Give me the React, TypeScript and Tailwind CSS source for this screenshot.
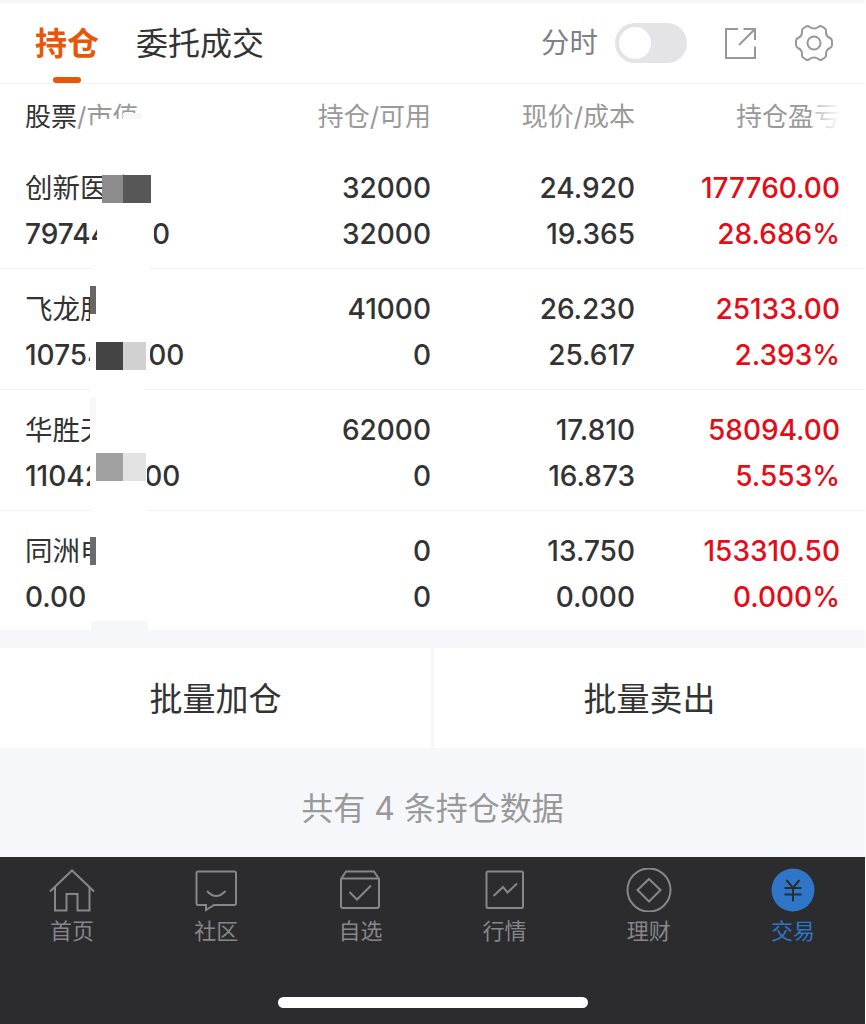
import { clsx } from "clsx";

const holdings = [
    {
        name: "创新医疗", value: "797440.00", amount: "32000", available: "32000", price: "24.920", cost: "19.365", profit: "177760.00", rate: "28.686%",
        masks: [
            "left-[102px] top-[27px] w-[21px] h-[28px] bg-[#8c8c8c]",
            "left-[123px] top-[27px] w-[28px] h-[28px] bg-[#575757]",
            "left-[97px] top-[64px] w-[57px] h-[46px] bg-white",
            "left-[93px] top-[110px] w-[57px] h-[16px] bg-white",
        ],
    },
    {
        name: "飞龙股份", value: "1075430.00", amount: "41000", available: "0", price: "26.230", cost: "25.617", profit: "25133.00", rate: "2.393%",
        masks: [
            "left-[90px] top-[10px] w-[60px] h-[88px] bg-white",
            "left-[90px] top-[17px] w-[6px] h-[28px] bg-[#666666]",
            "left-[90px] top-[73px] w-[56px] h-[56px] bg-white",
            "left-[96px] top-[73px] w-[27px] h-[28px] bg-[#444444]",
            "left-[123px] top-[73px] w-[23px] h-[28px] bg-[#d1d1d1]",
        ],
    },
    {
        name: "华胜天成", value: "1104220.00", amount: "62000", available: "0", price: "17.810", cost: "16.873", profit: "58094.00", rate: "5.553%",
        masks: [
            "left-[90px] top-0 w-[57px] h-[130px] bg-white",
            "left-[90px] top-[8px] w-[6px] h-[27px] bg-[#f7f7f7]",
            "left-[96px] top-[63px] w-[27px] h-[28px] bg-[#a1a1a1]",
            "left-[123px] top-[63px] w-[23px] h-[28px] bg-[#e3e3e3]",
        ],
    },
    {
        name: "同洲电子", value: "0.00", amount: "0", available: "0", price: "13.750", cost: "0.000", profit: "153310.50", rate: "0.000%",
        masks: [
            "left-[90px] top-[10px] w-[60px] h-[60px] bg-white",
            "left-[90px] top-[26px] w-[6px] h-[28px] bg-[#6b6b6b]",
            "left-[91px] top-[110px] w-[57px] h-[10px] bg-[#f6f7fa]",
        ],
    },
];

const tabs = [
    {
        label: "首页",
        icon: (
            <>
                <path d="M2 23.5 24 2.5 46 23.5" />
                <path d="M7 19V42.5H18.5V26H29.500V42.5H41.500V19" />
            </>
        ),
    },
    {
        label: "社区",
        icon: (
            <>
                <path d="M5.500 3.500H42.500Q44 3.500 44 5V35Q44 37 42.500 37H22L14 42V37H6Q4.500 37 4.500 35V5Q4.500 3.500 6 3.500Z" />
                <path d="M15 23Q24 33 33.500 23" />
            </>
        ),
    },
    {
        label: "自选",
        icon: (
            <>
                <path d="M5 11 10 3.500H38L43 11V38Q43 40 41 40H7Q5 40 5 38Z" />
                <path d="M5 10.500H43M13.500 24 21 31.500 35 17.500" />
            </>
        ),
    },
    {
        label: "行情",
        icon: (
            <>
                <rect x="5.500" y="3.500" width="36.500" height="36.500" rx="1.500" />
                <path d="M12.500 28 22 19 26.500 24.500 36 15.500" />
            </>
        ),
    },
    {
        label: "理财",
        icon: (
            <>
                <circle cx="24" cy="22" r="21.500" />
                <path d="M24 11 35.500 22 24 33.500 12.500 22Z" />
            </>
        ),
    },
    {
        label: "交易",
        active: true,
        icon: (
            <>
                <circle cx="24" cy="22" r="21.500" fill="#2f76c9" stroke="none" />
                <path d="M17.500 12 24 20 30.500 12M15.500 20H32.500M15.500 26.500H32.500M24 20V33.500" stroke="#2c2b2e" />
            </>
        ),
    },
];

function Pair({ top, bottom, className }: { top: string; bottom: string; className?: string }) {
    return (
        <div className={clsx("flex flex-col items-end leading-[46px]", className)}>
            <span>{top}</span>
            <span>{bottom}</span>
        </div>
    );
}

export default function App() {
    return (
        <main className="w-[865px] h-[1024px] overflow-hidden flex flex-col bg-[#f6f7fa] text-[#333333] font-['Inter','Noto_Sans_CJK_SC',sans-serif] whitespace-nowrap">
            <header className="mt-[3px] h-[81px] shrink-0 flex bg-white border-b border-[#f1f1f3]">
                <div className="ml-[35px] w-16 flex flex-col items-center">
                    <span className="h-[74px] leading-[82px] text-[32px] font-bold text-[#e8560a]">持仓</span>
                    <span className="w-7 h-[6px] shrink-0 rounded-[3px] bg-[#e8560a]" />
                </div>
                <span className="ml-[37px] leading-[82px] text-[32px]">委托成交</span>
                <div className="ml-auto flex items-center">
                    <span className="text-[28.500px] text-[#808088]">分时</span>
                    <div className="ml-[17px] w-[72px] h-10 p-1 rounded-full bg-[#e4e4e6]">
                        <div className="w-8 h-8 rounded-full bg-white" />
                    </div>
                    <svg className="ml-[37px]" width="34" height="34" viewBox="0 0 34 34" fill="none" stroke="#98989b" strokeWidth="2">
                        <path d="M14 3H2V32H31V20.500M19.500 3H31V14M31 3 15 19" />
                    </svg>
                    <svg className="ml-9 mr-[31px]" width="40" height="40" viewBox="0 0 40 40" fill="none" stroke="#98989b" strokeWidth="2" strokeLinejoin="round">
                        <path d="M12 3.500Q14 2.500 15.500 4Q20 7 24.500 4Q26 2.500 28 3.500L31 5.500Q32 6.500 32 8Q31.500 13 36 15Q38 16 38 18V22Q38 24 36 25Q31.500 27 32 32Q32 33.500 31 34.500L28 36.500Q26 37.500 24.500 36Q20 33 15.500 36Q14 37.500 12 36.500L9 34.500Q8 33.500 8 32Q8.500 27 4 25Q2 24 2 22V18Q2 16 4 15Q8.500 13 8 8Q8 6.500 9 5.500Z" />
                        <circle cx="20" cy="20" r="6.500" />
                    </svg>
                </div>
            </header>

            <section className="h-[546px] shrink-0 bg-white">
                <div className="relative h-16 pl-[25px] grid grid-cols-[256px_150px_204px_205px] text-right text-[26px] leading-[66px] text-[#999999]">
                    <span className="text-left"><span className="text-[#333333]">股票</span>/市值</span>
                    <span>持仓/可用</span>
                    <span>现价/成本</span>
                    <span>持仓盈亏</span>
                    <div className="absolute left-[97px] top-[35px] w-[54px] h-[25px] bg-white" />
                    <div className="absolute left-[123px] top-[29px] w-[19px] h-[6px] bg-[#f7f7f7]" />
                    <div className="absolute left-[811px] top-[10px] w-[30px] h-[46px] bg-linear-to-r from-white/30 to-white" />
                </div>
                {holdings.map((item) => (
                    <div key={item.name} className="relative h-[121px] last:border-b-0 pt-[17px] pl-[25px] grid grid-cols-[256px_150px_204px_205px] border-b border-[#f1f1f3] text-[28px] font-medium">
                        <div className="flex flex-col leading-[46px]">
                            <span className="text-[27.500px] font-normal">{item.name}</span>
                            <span>{item.value}</span>
                        </div>
                        <Pair top={item.amount} bottom={item.available} />
                        <Pair top={item.price} bottom={item.cost} />
                        <Pair top={item.profit} bottom={item.rate} className="text-[#e60b17]" />
                        {item.masks.map((mask) => (
                            <div key={mask} className={clsx("absolute", mask)} />
                        ))}
                    </div>
                ))}
            </section>

            <div className="mt-[18px] h-[100px] shrink-0 flex gap-[3px] text-[33px] leading-[102px] text-center">
                <button className="w-[431px] bg-white">批量加仓</button>
                <button className="flex-1 bg-white">批量卖出</button>
            </div>

            <p className="h-[109px] shrink-0 text-center text-[32px] leading-[121px] text-[#999999]">共有 4 条持仓数据</p>

            <nav className="flex-1 flex flex-col items-center bg-[#2c2b2e]">
                <div className="w-full h-[140px] grid grid-cols-6 pt-[11px]">
                    {tabs.map((tab) => (
                        <div key={tab.label} className={clsx("flex flex-col items-center text-[22px] leading-[38px]", tab.active ? "text-[#2f76c9]" : "text-[#87868b]")}>
                            <svg width="48" height="44" viewBox="0 0 48 44" fill="none" stroke="currentColor" strokeWidth="2">
                                {tab.icon}
                            </svg>
                            <span>{tab.label}</span>
                        </div>
                    ))}
                </div>
                <div className="w-[310px] h-[11px] rounded-full bg-white" />
            </nav>
        </main>
    );
}
